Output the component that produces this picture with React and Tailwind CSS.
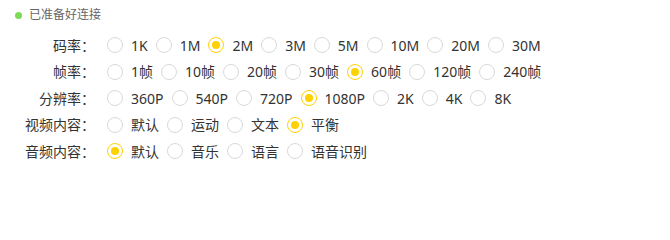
import React, { useState } from 'react';

const groups = [
  { key: 'bitrate', label: '码率：', options: ['1K', '1M', '2M', '3M', '5M', '10M', '20M', '30M'], value: '2M' },
  { key: 'fps', label: '帧率：', options: ['1帧', '10帧', '20帧', '30帧', '60帧', '120帧', '240帧'], value: '60帧' },
  { key: 'res', label: '分辨率：', options: ['360P', '540P', '720P', '1080P', '2K', '4K', '8K'], value: '1080P' },
  { key: 'video', label: '视频内容：', options: ['默认', '运动', '文本', '平衡'], value: '平衡' },
  { key: 'audio', label: '音频内容：', options: ['默认', '音乐', '语言', '语音识别'], value: '默认' },
];

function Radio({ checked, label, onClick }) {
  return (
    <label onClick={onClick} className="flex items-center cursor-pointer">
      <span
        className={`w-4 h-4 rounded-full border flex items-center justify-center bg-white ${
          checked ? 'border-[#ffd100]' : 'border-[#d9d9d9]'
        }`}
      >
        {checked && <span className="w-2 h-2 rounded-full bg-[#ffd100]" />}
      </span>
      <span className="px-2 text-[14px] text-[#333]">{label}</span>
    </label>
  );
}

export default function App() {
  const [values, setValues] = useState(
    Object.fromEntries(groups.map((g) => [g.key, g.value]))
  );

  return (
    <div
      className="w-[670px] h-[225px] bg-white"
      style={{ fontFamily: '"Noto Sans", "Noto Sans CJK SC", sans-serif' }}
    >
      {/* status */}
      <div className="flex items-center h-[32px] pl-[15px] pb-[2px]">
        <span className="w-[7px] h-[7px] rounded-full bg-[#7ed957]" />
        <span className="ml-[7px] text-[12px] text-[#666]">已准备好连接</span>
      </div>

      <div className="flex flex-col">
        {groups.map((g) => (
          <div key={g.key} className="flex items-center h-[26.5px]">
            <div className="w-[95px] text-right text-[14px] text-[#333]">{g.label}</div>
            <div className="flex items-center ml-[12px]">
              {g.options.map((o) => (
                <Radio
                  key={o}
                  label={o}
                  checked={values[g.key] === o}
                  onClick={() => setValues({ ...values, [g.key]: o })}
                />
              ))}
            </div>
          </div>
        ))}
      </div>
    </div>
  );
}
